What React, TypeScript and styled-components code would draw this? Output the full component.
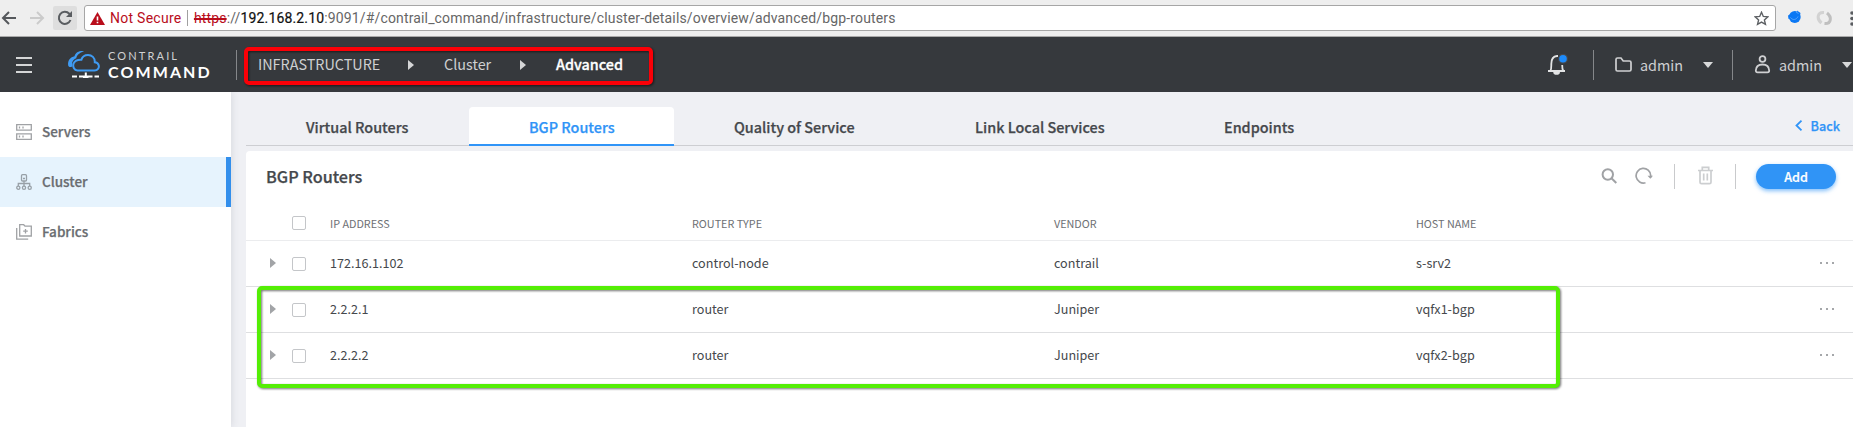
import React from "react";
import styled, { createGlobalStyle, css } from "styled-components";

const GlobalStyle = createGlobalStyle`
  * { box-sizing: border-box; }
  body {
    margin: 0;
    overflow: hidden;
    background: #eff0f4;
    font-family: "Noto Sans CJK SC", "Noto Sans", sans-serif;
    color: #45484c;
  }
  svg { display: block; flex: none; }
`;

const Page = styled.div`
  position: relative;
  display: flex;
  flex-direction: column;
  width: 1853px;
  height: 427px;
  overflow: hidden;
`;

/* ---------- browser toolbar ---------- */

const BrowserBar = styled.div`
  display: flex;
  align-items: flex-start;
  height: 37px;
  flex: none;
  padding: 5px 0 0 1px;
  background: #eeeeee;
  border-bottom: 1px solid #a9a9a9;
`;

const NavIcon = styled.div`
  width: 28px;
  padding-top: 5px;
`;

const ReloadButton = styled.div`
  display: flex;
  align-items: center;
  justify-content: center;
  width: 24px;
  height: 24px;
  margin: 1px 7px 0 -4px;
  background: #dedede;
  border-radius: 2px;
`;

const AddressBox = styled.div`
  display: flex;
  align-items: center;
  width: 1694px;
  height: 26px;
  padding: 0 6px 0 5px;
  background: #fff;
  border: 1px solid #a6a6a6;
  border-radius: 3px;
  font-family: Roboto, sans-serif;
  font-size: 14px;
  line-height: 24px;
  white-space: nowrap;
`;

const NotSecure = styled.span`
  width: 77px;
  margin-left: 5px;
  color: #b90d1b;
  letter-spacing: 0.28px;
`;

const AddressDivider = styled.i`
  width: 1px;
  height: 16px;
  margin-right: 6px;
  background: #a0a0a0;
`;

const Url = styled.span`
  flex: 1;
  color: #666;
  letter-spacing: 0.15px;
  s { color: #b90d1b; text-decoration-thickness: 1.5px; }
  b { color: #111; font-weight: 400; -webkit-text-stroke: 0.2px #111; }
`;

const Extensions = styled.div`
  display: flex;
  gap: 14px;
  padding: 5px 0 0 11px;
`;

/* ---------- application header ---------- */

const Header = styled.header`
  display: flex;
  align-items: center;
  height: 55px;
  flex: none;
  padding-left: 16px;
  background: #36393d;
  color: #cfd0d2;
`;

const Burger = styled.div`
  display: flex;
  flex-direction: column;
  gap: 5px;
  width: 51px;
  i { width: 16px; height: 2px; background: #d5d6d7; }
`;

const Wordmark = styled.div`
  display: flex;
  flex-direction: column;
  width: 136px;
  padding-left: 8px;
  font-family: Lato, sans-serif;
  white-space: nowrap;
`;

const WordTop = styled.span`
  font-size: 11px;
  line-height: 14px;
  letter-spacing: 2.15px;
  color: #d0d1d2;
`;

const WordBottom = styled.span`
  margin-top: 1px;
  font-size: 16px;
  line-height: 16px;
  font-weight: 700;
  letter-spacing: 2.1px;
  color: #fff;
`;

const HeaderDivider = styled.i`
  width: 1px;
  height: 30px;
  flex: none;
  background: #85878a;
`;

const Crumbs = styled.nav`
  display: flex;
  align-items: center;
  flex: 1;
  padding-left: 21px;
  font-size: 14.4px;
  line-height: 20px;
`;

const Crumb = styled.span<{ $w: number; $active?: boolean }>`
  width: ${(p) => p.$w}px;
  padding-bottom: 2px;
  white-space: nowrap;
  ${(p) => p.$active && css`color: #fff; font-weight: 500; -webkit-text-stroke: 0.3px #fff;`}
`;

const CrumbArrow = styled.i<{ $gap: number }>`
  margin-right: ${(p) => p.$gap}px;
  border: 5px solid transparent;
  border-left: 6px solid #d5d6d7;
  border-right: 0;
`;

const BellSlot = styled.div`
  width: 46px;
`;

const Account = styled.div<{ $w: number }>`
  display: flex;
  align-items: center;
  width: ${(p) => p.$w}px;
  padding-left: 21px;
`;

const AccountName = styled.span`
  width: 63px;
  margin-left: 8px;
  font-size: 14.4px;
  line-height: 20px;
`;

const Caret = styled.i`
  flex: none;
  border: 5px solid transparent;
  border-top: 6px solid #d8d9da;
  border-bottom: 0;
`;

/* ---------- body ---------- */

const Body = styled.div`
  display: flex;
  flex: 1;
  min-height: 0;
`;

const Sidebar = styled.aside`
  width: 231px;
  flex: none;
  padding-top: 15px;
  background: #fff;
  box-shadow: 0 0 8px rgba(60, 70, 90, 0.16);
  clip-path: inset(0 -14px 0 0);
`;

const SideItem = styled.div<{ $active?: boolean }>`
  display: flex;
  align-items: center;
  gap: 10px;
  height: 50px;
  padding-left: 16px;
  font-size: 13.5px;
  line-height: 20px;
  font-weight: 500;
  color: #6a6d71;
  -webkit-text-stroke: 0.25px currentColor;
  span { padding-bottom: 2px; }
  ${(p) =>
    p.$active &&
    css`
      background: #e6f3fd;
      border-right: 5px solid #338fec;
    `}
`;

const Main = styled.main`
  display: flex;
  flex-direction: column;
  flex: 1;
  padding: 15px 0 0 15px;
  min-width: 0;
`;

const Tabs = styled.div`
  display: flex;
  height: 39px;
  flex: none;
  border-bottom: 1px solid #cdced2;
`;

const Tab = styled.div<{ $w: number; $active?: boolean }>`
  width: ${(p) => p.$w}px;
  height: 39px;
  padding: 10px 0 0 60px;
  font-size: 14.4px;
  line-height: 20px;
  font-weight: 500;
  -webkit-text-stroke: 0.25px currentColor;
  white-space: nowrap;
  ${(p) =>
    p.$active &&
    css`
      color: #3094f7;
      background: #fff;
      border-bottom: 2px solid #3094f7;
      border-radius: 4px 4px 0 0;
    `}
`;

const Back = styled.div`
  display: flex;
  gap: 8px;
  margin-left: auto;
  padding: 9px 13px 0 0;
  color: #3094f7;
  font-size: 12.6px;
  line-height: 20px;
  font-weight: 500;
  -webkit-text-stroke: 0.25px currentColor;
  svg { margin-top: 4px; }
`;

const Card = styled.section`
  flex: 1;
  margin-top: 5px;
  background: #fff;
  border-radius: 4px 0 0 0;
`;

const CardHead = styled.div`
  display: flex;
  align-items: center;
  height: 51px;
  padding-left: 20px;
`;

const Title = styled.h2`
  flex: 1;
  margin: 0 0 1px;
  font-size: 16.2px;
  line-height: 24px;
  font-weight: 500;
  -webkit-text-stroke: 0.25px currentColor;
`;

const ToolDivider = styled.i`
  width: 1px;
  height: 25px;
  background: #c9cacc;
`;

const Tool = styled.div<{ $l: number; $r: number }>`
  margin: 0 ${(p) => p.$r}px 2px ${(p) => p.$l}px;
`;

const AddButton = styled.button`
  width: 80px;
  height: 25px;
  margin: 0 17px 0 20px;
  padding: 0;
  border: 0;
  border-radius: 13px;
  background: #3094f6;
  box-shadow: 0 2px 4px rgba(48, 148, 246, 0.6);
  color: #fff;
  font: 500 12.6px/24px "Noto Sans CJK SC", "Noto Sans", sans-serif;
  -webkit-text-stroke: 0.2px #fff;
`;

const Row = styled.div<{ $head?: boolean }>`
  display: grid;
  grid-template-columns: 46px 38px repeat(4, 362px) 1fr;
  align-items: center;
  height: ${(p) => (p.$head ? 39 : 46)}px;
  padding-top: ${(p) => (p.$head ? 4 : 0)}px;
  border-bottom: 1px solid ${(p) => (p.$head ? "#ebecee" : "#dedfe1")};
  font-size: ${(p) => (p.$head ? 10.8 : 12.6)}px;
  line-height: 20px;
  color: ${(p) => (p.$head ? "#6d7074" : "#45484c")};
`;

const Cell = styled.span`
  padding-bottom: 2px;
`;

const Expander = styled.i`
  width: 6px;
  height: 10px;
  margin: 0 0 1px 24px;
  border: 5px solid transparent;
  border-left: 6px solid #a2a4a7;
  border-right: 0;
`;

const Checkbox = styled.i`
  width: 14px;
  height: 14px;
  border: 1px solid #c4c6c9;
  border-radius: 2px;
  background: #fff;
`;

const Dots = styled.div`
  display: flex;
  gap: 4px;
  margin: 0 0 1px 42px;
  i { width: 2px; height: 2px; background: #a5a7aa; }
`;

/* Highlight frames drawn over the page */
const Frame = styled.div<{ $x: number; $y: number; $w: number; $h: number; $c: string }>`
  position: absolute;
  left: ${(p) => p.$x}px;
  top: ${(p) => p.$y}px;
  width: ${(p) => p.$w}px;
  height: ${(p) => p.$h}px;
  border: 4px solid ${(p) => p.$c};
  border-radius: 5px;
  filter: drop-shadow(1px 1px 1px rgba(0, 0, 0, 0.55));
`;

const Logo = () => (
  <svg width="33" height="29" viewBox="0 0 33 29" fill="none">
    <path d="M1.2 15.5C.4 10.500 3.500 7 7.500 6.200 8.500 2.500 12.500.600 17 1.200 11.500 3 9.500 6 9.300 8.200 6 9.500 4.500 12 5.200 16.500 3 17.500 1.700 17 1.200 15.500Z" fill="#3f9bf3" />
    <path d="M10.500 20.500h17c3.200-.3 4.700-2.500 4.300-4.800-.4-2.200-2-3.400-4-3.500.2-4.500-3-7.200-6.800-7.200-3.500 0-5.800 2-6.600 4.800-3.600-.2-6.400.8-7.900 3.800-1 3.300.8 6.500 4 6.900Z" stroke="#3f9bf3" strokeWidth="2" />
    <path d="M5 26.500h5M12 26.500h13.500M27.500 26.500H32M18.800 22.500v4" stroke="#fff" strokeWidth="2" />
    <path d="M16 26h5.500v2H16z" fill="#fff" />
  </svg>
);

const Bell = () => (
  <svg width="22" height="22" viewBox="0 0 22 22" fill="none" stroke="#e2e3e4" strokeWidth="1.800">
    <path d="M1 17h17M3.300 17c1.200-2 1-4 1-7C4.300 5.500 6.300 2.300 10 2h1M15.200 11c0 3 .1 4.500 1 6" />
    <path d="M7 18c.5 2.600 4.700 2.600 5.200 0" fill="#e2e3e4" />
    <circle cx="16" cy="4.800" r="5" fill="#47494d" stroke="none" />
    <circle cx="16" cy="4.800" r="3.800" fill="#1d8bfb" stroke="none" />
  </svg>
);

const rows = [
  ["172.16.1.102", "control-node", "contrail", "s-srv2"],
  ["2.2.2.1", "router", "Juniper", "vqfx1-bgp"],
  ["2.2.2.2", "router", "Juniper", "vqfx2-bgp"],
];

export default function App() {
  return (
    <Page>
      <GlobalStyle />
      <BrowserBar>
        <NavIcon>
          <svg width="16" height="16" viewBox="0 0 16 16" fill="none" stroke="#55585c" strokeWidth="2">
            <path d="M15 8H2.500M8 2 2 8l6 6" />
          </svg>
        </NavIcon>
        <NavIcon>
          <svg width="16" height="16" viewBox="0 0 16 16" fill="none" stroke="#cbcbcb" strokeWidth="2">
            <path d="M1 8h12.500M8 2l6 6-6 6" />
          </svg>
        </NavIcon>
        <ReloadButton>
          <svg width="16" height="16" viewBox="0 0 16 16" fill="none" stroke="#5a5d61" strokeWidth="2">
            <path d="M13.500 10A6 6 0 1 1 12.300 3.800L14 5.500" />
            <path d="M15 1v6H9z" fill="#5a5d61" stroke="none" />
          </svg>
        </ReloadButton>
        <AddressBox>
          <svg width="15" height="13" viewBox="0 0 15 13">
            <path d="M7.500 0 15 13H0z" fill="#b90d1b" />
            <path d="M7.500 4.500v4M7.500 9.700v1.600" stroke="#fff" strokeWidth="1.600" />
          </svg>
          <NotSecure>Not Secure</NotSecure>
          <AddressDivider />
          <Url>
            <s>https</s>://<b>192.168.2.10</b>:9091/#/contrail_command/infrastructure/cluster-details/overview/advanced/bgp-routers
          </Url>
          <svg width="15" height="15" viewBox="0 0 14 14" fill="none" stroke="#5d6064" strokeWidth="1.300">
            <path d="m7 1.200 1.700 3.900 4.200.4-3.200 2.800 1 4.200L7 10.300l-3.700 2.200 1-4.200L1.100 5.500l4.200-.4z" />
          </svg>
        </AddressBox>
        <Extensions>
          <svg width="15" height="14" viewBox="0 0 15 14">
            <circle cx="7.800" cy="7" r="5.900" fill="#0b78f4" />
            <path d="M1 5.500 4 4v4L1.500 9zM10 .5l3.500 2.500-1 4-2-2z" fill="#0b78f4" />
            <path d="M3.500 7.500c2 3 6 2.500 7.500-1M9 2l2.500 1.500" stroke="#5aa6fb" fill="none" />
          </svg>
          <svg width="17" height="16" viewBox="0 0 17 16" fill="none" strokeWidth="3">
            <path d="M8 2.500C1 2 .5 9 5.500 13" stroke="#d2d2d2" />
            <path d="M8.500 13.500c7 .5 7.500-6.500 2.500-10.500" stroke="#bfbfbf" />
          </svg>
          <svg width="6" height="18" viewBox="0 0 6 18" fill="#5a5d61">
            <circle cx="5" cy="3" r="1.800" /><circle cx="5" cy="8.500" r="1.800" /><circle cx="5" cy="14" r="1.800" />
          </svg>
        </Extensions>
      </BrowserBar>

      <Header>
        <Burger><i /><i /><i /></Burger>
        <Logo />
        <Wordmark>
          <WordTop>CONTRAIL</WordTop>
          <WordBottom>COMMAND</WordBottom>
        </Wordmark>
        <HeaderDivider />
        <Crumbs>
          <Crumb $w={150}>INFRASTRUCTURE</Crumb>
          <CrumbArrow $gap={30} />
          <Crumb $w={76}>Cluster</Crumb>
          <CrumbArrow $gap={30} />
          <Crumb $w={80} $active>Advanced</Crumb>
        </Crumbs>
        <BellSlot><Bell /></BellSlot>
        <HeaderDivider />
        <Account $w={138}>
          <svg width="17" height="15" viewBox="0 0 17 15" fill="none" stroke="#cfd0d2" strokeWidth="1.700">
            <path d="M1 12.500v-10C1 1.500 1.500 1 2.500 1H6l2.200 3h6.300c1 0 1.500.5 1.500 1.500v7c0 1-.5 1.500-1.500 1.500h-12C1.500 14 1 13.500 1 12.500Z" />
          </svg>
          <AccountName>admin</AccountName>
          <Caret />
        </Account>
        <HeaderDivider />
        <Account $w={120}>
          <svg width="17" height="19" viewBox="0 0 17 19" fill="none" stroke="#cfd0d2" strokeWidth="1.800">
            <circle cx="8.500" cy="4" r="2.900" />
            <path d="M1.800 15.500C2 11.500 4.500 9.500 8.500 9.500s6.500 2 6.700 6c0 1.200-.6 1.800-1.700 1.800h-10c-1.100 0-1.700-.6-1.700-1.800Z" />
          </svg>
          <AccountName>admin</AccountName>
          <Caret />
        </Account>
      </Header>

      <Body>
        <Sidebar>
          <SideItem>
            <svg width="16" height="16" viewBox="0 0 16 16" fill="none" stroke="#a0a2a5" strokeWidth="1.300">
              <path d="M.7.700h14.600v5.400H.7zM.7 9.900h14.600v5.400H.7z" />
              <path d="M3.500 2.500v2M7 2.500v2M3.500 11.600v2M7 11.600v2" />
            </svg>
            <span>Servers</span>
          </SideItem>
          <SideItem $active>
            <svg width="16" height="16" viewBox="0 0 16 16" fill="none" stroke="#98a0a7" strokeWidth="1.300">
              <rect x="5.500" y=".7" width="5" height="6.300" rx="1" />
              <path d="M7 4.500h2M8 7v5M2.300 12V9.500h11.400V12" />
              <circle cx="2.300" cy="13.700" r="1.600" /><circle cx="8" cy="13.700" r="1.600" /><circle cx="13.700" cy="13.700" r="1.600" />
            </svg>
            <span>Cluster</span>
          </SideItem>
          <SideItem>
            <svg width="16" height="16" viewBox="0 0 16 16" fill="none" stroke="#a0a2a5" strokeWidth="1.300">
              <path d="M3.700 12V.7h4l1.300 1.500h6.300V12zM.7 4v11.200h11.500M9.500 5v4.500M7.200 7.200h4.600" />
            </svg>
            <span>Fabrics</span>
          </SideItem>
        </Sidebar>

        <Main>
          <Tabs>
            <Tab $w={223}>Virtual Routers</Tab>
            <Tab $w={205} $active>BGP Routers</Tab>
            <Tab $w={241}>Quality of Service</Tab>
            <Tab $w={249}>Link Local Services</Tab>
            <Tab $w={190}>Endpoints</Tab>
            <Back>
              <svg width="8" height="11" viewBox="0 0 8 11" fill="none" stroke="#3094f7" strokeWidth="1.800">
                <path d="M6.500.7 1.500 5.500l5 4.800" />
              </svg>
              Back
            </Back>
          </Tabs>
          <Card>
            <CardHead>
              <Title>BGP Routers</Title>
              <Tool $l={0} $r={18}>
                <svg width="16" height="16" viewBox="0 0 16 16" fill="none" stroke="#a0a2a5" strokeWidth="2">
                  <circle cx="6.800" cy="6.500" r="5.200" /><path d="m10.500 10.300 4.800 4.700" />
                </svg>
              </Tool>
              <Tool $l={0} $r={21}>
                <svg width="18" height="17" viewBox="0 0 18 17" fill="none" stroke="#a0a2a5" strokeWidth="1.700">
                  <path d="M10.500 15.700A7.300 7.300 0 1 1 15.700 8.500v2" />
                  <path d="M12.500 8.700H18l-2.700 3z" fill="#a0a2a5" stroke="none" />
                </svg>
              </Tool>
              <ToolDivider />
              <Tool $l={23} $r={22}>
                <svg width="15" height="19" viewBox="0 0 15 19" fill="none" stroke="#ccced0" strokeWidth="1.700">
                  <path d="M0 4.500h15M4.300 4.500V1.300h6.400v3.200M2 4.500v11.700c0 1 .5 1.500 1.500 1.500h8c1 0 1.500-.5 1.500-1.500V4.500M5.700 7.500v7M9.300 7.500v7" />
                </svg>
              </Tool>
              <ToolDivider />
              <AddButton>Add</AddButton>
            </CardHead>
            <Row $head>
              <span />
              <Checkbox />
              <span>IP ADDRESS</span>
              <span>ROUTER TYPE</span>
              <span>VENDOR</span>
              <span>HOST NAME</span>
            </Row>
            {rows.map((r) => (
              <Row key={r[0]}>
                <Expander />
                <Checkbox />
                {r.map((c) => <Cell key={c}>{c}</Cell>)}
                <Dots><i /><i /><i /></Dots>
              </Row>
            ))}
          </Card>
        </Main>
      </Body>

      <Frame $x={244} $y={47} $w={409} $h={38} $c="#fb0007" />
      <Frame $x={257} $y={286} $w={1303} $h={102} $c="#54ee05" />
    </Page>
  );
}
